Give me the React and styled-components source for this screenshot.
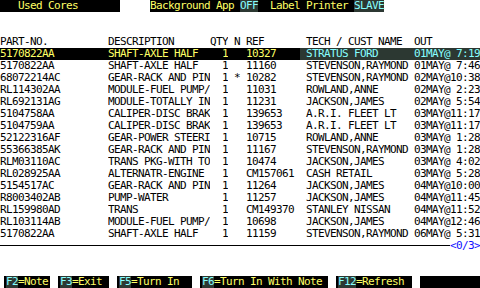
import React from "react";
import styled, { createGlobalStyle } from "styled-components";

const YELLOW = "#ffff66";
const CYAN = "#88ffff";
const DARK = "#2c3832";

const GlobalStyle = createGlobalStyle`
  html, body {
    margin: 0;
    padding: 0;
    background: #ffffff;
  }
  body {
    font-family: "DejaVu Sans Mono", "Liberation Mono", monospace;
    font-size: 11px;
    letter-spacing: -0.62px;
    line-height: 12px;
    color: #000000;
  }
`;

const Screen = styled.div`
  width: 480px;
  height: 288px;
  display: flex;
  flex-direction: column;
  overflow: hidden;
  white-space: pre;
`;

const TitleBar = styled.div`
  display: flex;
  height: 12px;
  gap: 30px;
`;

const TitleBlock = styled.div`
  display: flex;
  background: #000000;
  color: ${YELLOW};
  width: ${({ $width }) => $width}px;
  padding-left: ${({ $indent }) => $indent || 0}px;
  box-sizing: border-box;
`;

const Flag = styled.span`
  background: ${DARK};
  color: ${CYAN};
`;

const Spacer = styled.div`
  height: ${({ $rows }) => $rows * 12}px;
  flex-shrink: 0;
`;

const Row = styled.div`
  display: grid;
  grid-template-columns: 108px 102px 18px 18px 54px 114px 66px;
  height: 12px;
  background: ${({ $active }) => ($active ? "#000000" : "transparent")};
  color: ${({ $active }) => ($active ? YELLOW : "#000000")};
`;

const Cell = styled.div`
  text-align: ${({ $right }) => ($right ? "right" : "left")};
  padding-left: ${({ $pad }) => $pad || 0}px;
  overflow: hidden;
`;

const NameCell = styled(Cell)`
  background: ${({ $active }) => ($active ? DARK : "transparent")};
  color: ${({ $active }) => ($active ? CYAN : "inherit")};
`;

const Separator = styled.div`
  display: flex;
  align-items: center;
  height: 12px;
`;

const Rule = styled.div`
  flex: 1;
  height: 1px;
  background: #000000;
  margin-top: -1px;
`;

const Pager = styled.span`
  color: #1010ff;
  width: 30px;
`;

const KeyBar = styled.div`
  display: flex;
  gap: 8px;
  padding-left: 4px;
  height: 12px;
`;

const KeyButton = styled.div`
  display: flex;
  width: ${({ $width }) => $width}px;
  background: #000000;
  color: ${YELLOW};
  padding-left: 2px;
  box-sizing: border-box;
`;

const KeyName = styled.span`
  background: ${DARK};
  color: ${CYAN};
`;

const rows = [
  ["5170822AA", "SHAFT-AXLE HALF", "1", "", "10327", "STRATUS FORD", "01MAY@ 7:19"],
  ["5170822AA", "SHAFT-AXLE HALF", "1", "", "11160", "STEVENSON,RAYMOND", "01MAY@ 7:46"],
  ["68072214AC", "GEAR-RACK AND PIN", "1", "*", "10282", "STEVENSON,RAYMOND", "02MAY@10:38"],
  ["RL114302AA", "MODULE-FUEL PUMP/", "1", "", "11031", "ROWLAND,ANNE", "02MAY@ 2:23"],
  ["RL692131AG", "MODULE-TOTALLY IN", "1", "", "11231", "JACKSON,JAMES", "02MAY@ 5:54"],
  ["5104758AA", "CALIPER-DISC BRAK", "1", "", "139653", "A.R.I. FLEET LT", "03MAY@11:17"],
  ["5104759AA", "CALIPER-DISC BRAK", "1", "", "139653", "A.R.I. FLEET LT", "03MAY@11:17"],
  ["52122316AF", "GEAR-POWER STEERI", "1", "", "10715", "ROWLAND,ANNE", "03MAY@ 1:28"],
  ["55366385AK", "GEAR-RACK AND PIN", "1", "", "11167", "STEVENSON,RAYMOND", "03MAY@ 1:28"],
  ["RLM03110AC", "TRANS PKG-WITH TO", "1", "", "10474", "JACKSON,JAMES", "03MAY@ 4:02"],
  ["RL028925AA", "ALTERNATR-ENGINE", "1", "", "CM157061", "CASH RETAIL", "03MAY@ 5:28"],
  ["5154517AC", "GEAR-RACK AND PIN", "1", "", "11264", "JACKSON,JAMES", "04MAY@10:00"],
  ["R8003402AB", "PUMP-WATER", "1", "", "11257", "JACKSON,JAMES", "04MAY@11:45"],
  ["RL159980AD", "TRANS", "1", "", "CM149370", "STANLEY NISSAN", "04MAY@11:52"],
  ["RL103114AB", "MODULE-FUEL PUMP/", "1", "", "10698", "JACKSON,JAMES", "04MAY@12:46"],
  ["5170822AA", "SHAFT-AXLE HALF", "1", "", "11159", "STEVENSON,RAYMOND", "06MAY@ 5:31"],
];

const keys = [
  { key: "F2", label: "=Note", width: 46 },
  { key: "F3", label: "=Exit", width: 51 },
  { key: "F5", label: "=Turn In", width: 75 },
  { key: "F6", label: "=Turn In With Note", width: 128 },
  { key: "F12", label: "=Refresh", width: 76 },
  { key: "", label: "", width: 60 },
];

function App() {
  return (
    <>
      <GlobalStyle />
      <Screen>
        <TitleBar>
          <TitleBlock $width={120} $indent={18}>Used Cores</TitleBlock>
          <TitleBlock $width={234}>
            {"Background App "}
            <Flag>OFF</Flag>
            {"  Label Printer "}
            <Flag>SLAVE</Flag>
          </TitleBlock>
        </TitleBar>
        <Spacer $rows={2} />
        <Row>
          <Cell>PART-NO.</Cell>
          <Cell>DESCRIPTION</Cell>
          <Cell>QTY</Cell>
          <Cell $pad={6}>N</Cell>
          <Cell>REF</Cell>
          <Cell $pad={6}>TECH / CUST NAME</Cell>
          <Cell>OUT</Cell>
        </Row>
        {rows.map((r, i) => {
          const active = i === 0;
          return (
            <Row key={i} $active={active}>
              <Cell>{r[0]}</Cell>
              <Cell>{r[1]}</Cell>
              <Cell $right>{r[2]}</Cell>
              <Cell $pad={6}>{r[3]}</Cell>
              <Cell>{r[4]}</Cell>
              <NameCell $active={active} $pad={6}>{r[5]}</NameCell>
              <NameCell $active={active}>{r[6]}</NameCell>
            </Row>
          );
        })}
        <Separator>
          <Rule />
          <Pager>&lt;0/3&gt;</Pager>
        </Separator>
        <Spacer $rows={2} />
        <KeyBar>
          {keys.map((k, i) => (
            <KeyButton key={i} $width={k.width}>
              {k.key && <KeyName>{k.key}</KeyName>}
              {k.label}
            </KeyButton>
          ))}
        </KeyBar>
      </Screen>
    </>
  );
}

export default App;
